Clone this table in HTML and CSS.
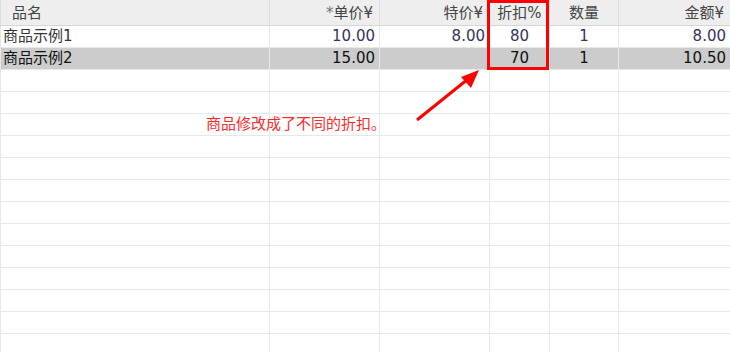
FILE: index.html
```html
<!DOCTYPE html>
<html lang="zh">
<head>
<meta charset="utf-8">
<link rel="stylesheet" href="styles.css">
</head>
<body>
<div class="sheet">
  <table class="grid">
    <colgroup>
      <col class="c-name"><col class="c-price"><col class="c-special"><col class="c-disc"><col class="c-qty"><col class="c-amt">
    </colgroup>
    <thead>
      <tr>
        <th class="left">品名</th>
        <th class="right"><span class="star">*</span>单价¥</th>
        <th class="right">特价¥</th>
        <th class="center">折扣%</th>
        <th class="center">数量</th>
        <th class="right">金额¥</th>
      </tr>
    </thead>
    <tbody>
      <tr class="r1">
        <td class="left">商品示例1</td>
        <td class="right">10.00</td>
        <td class="right">8.00</td>
        <td class="center">80</td>
        <td class="center">1</td>
        <td class="right">8.00</td>
      </tr>
      <tr class="sel">
        <td class="left">商品示例2</td>
        <td class="right">15.00</td>
        <td class="right"></td>
        <td class="center">70</td>
        <td class="center">1</td>
        <td class="right">10.50</td>
      </tr>
      <tr><td></td><td></td><td></td><td></td><td></td><td></td></tr>
      <tr><td></td><td></td><td></td><td></td><td></td><td></td></tr>
      <tr><td></td><td></td><td></td><td></td><td></td><td></td></tr>
      <tr><td></td><td></td><td></td><td></td><td></td><td></td></tr>
      <tr><td></td><td></td><td></td><td></td><td></td><td></td></tr>
      <tr><td></td><td></td><td></td><td></td><td></td><td></td></tr>
      <tr><td></td><td></td><td></td><td></td><td></td><td></td></tr>
      <tr><td></td><td></td><td></td><td></td><td></td><td></td></tr>
      <tr><td></td><td></td><td></td><td></td><td></td><td></td></tr>
      <tr><td></td><td></td><td></td><td></td><td></td><td></td></tr>
      <tr><td></td><td></td><td></td><td></td><td></td><td></td></tr>
      <tr><td></td><td></td><td></td><td></td><td></td><td></td></tr>
      <tr><td></td><td></td><td></td><td></td><td></td><td></td></tr>
    </tbody>
  </table>
  <div class="mark"></div>
  <svg class="arrow" width="730" height="352" viewBox="0 0 730 352">
    <line x1="417" y1="120" x2="468" y2="79" stroke="#ff0000" stroke-width="3"/>
    <polygon points="479,70 461,77 471,88" fill="#ff0000"/>
  </svg>
  <div class="note">商品修改成了不同的折扣。</div>
</div>
</body>
</html>
```
FILE: styles.css
```css
html, body {
  margin: 0;
  padding: 0;
  background: #ffffff;
}
.sheet {
  position: relative;
  width: 730px;
  height: 352px;
  overflow: hidden;
  font-family: "DejaVu Sans", "Noto Sans CJK SC", sans-serif;
  font-size: 15px;
}
.grid {
  border-collapse: collapse;
  table-layout: fixed;
  width: 730px;
}
.c-name { width: 269px; }
.c-price { width: 110px; }
.c-special { width: 110px; }
.c-disc { width: 60px; }
.c-qty { width: 69px; }
.c-amt { width: 112px; }
.grid th, .grid td {
  padding: 0 4px;
  white-space: nowrap;
  overflow: hidden;
  border-left: 1px solid #e8e8e8;
  border-right: 1px solid #e8e8e8;
  border-bottom: 1px solid #e8e8e8;
  line-height: 20px;
  height: 21px;
  box-sizing: border-box;
}
.grid th {
  height: 25px;
  font-weight: normal;
  color: #444444;
  background: #eeeeee;
  border-bottom: 1px solid #d6d6d6;
  border-left-color: #dddddd;
  border-right-color: #dddddd;
  padding-top: 1px;
}
.grid tbody tr { height: 22px; }
.grid tbody td { height: 22px; }
.grid th.left { padding-left: 11px; text-align: left; }
.grid td.left { padding-left: 2px; }
.grid th.right { padding-right: 6px; }
.left { text-align: left; }
.right { text-align: right; }
.center { text-align: center; }
.star { color: #777777; }
.r1 td { color: #34345a; }
.r1 td.left { color: #333333; }
.sel td {
  background: #cccccc;
  color: #111111;
  border-bottom-color: #e8e8e8;
}
.mark {
  position: absolute;
  left: 487px;
  top: 0;
  width: 56px;
  height: 64px;
  border: 3px solid #ff0000;
}
.arrow {
  position: absolute;
  left: 0;
  top: 0;
}
.note {
  position: absolute;
  left: 206px;
  top: 113px;
  color: #ff2a2a;
  font-family: "Noto Sans CJK SC", sans-serif;
  font-size: 15px;
  line-height: 20px;
}
```
